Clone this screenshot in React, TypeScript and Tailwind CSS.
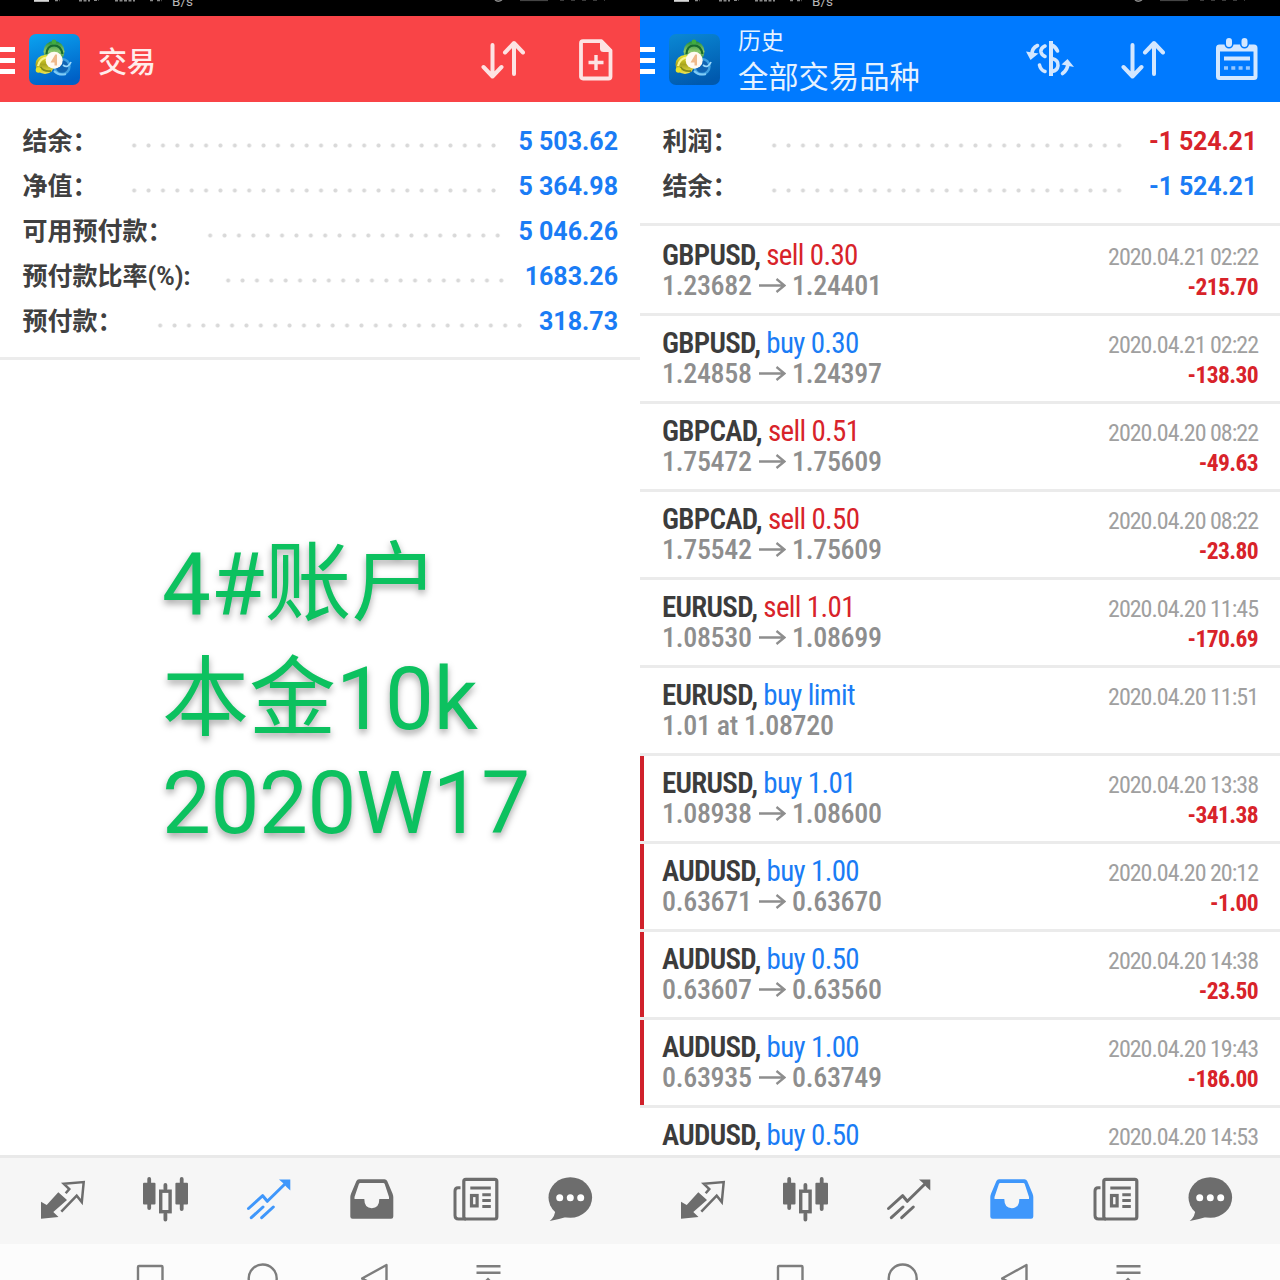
import React from "react";

const GRAY = "#6d6d6d";
const BLUE = "#3f97fb";

type IconProps = { color: string };

function StatusBar() {
  return (
    <div className="relative h-4 shrink-0 overflow-hidden bg-black">
      <svg className="absolute left-0 top-0" width="640" height="16" fill="none">
        <path d="M34 0.8H49" stroke="#d8d8d8" strokeWidth="2" />
        <path d="M55 0.5H60M79 0.7H90M94 .4h5M115 0.8H135M150 .5h4M157 .5h5" stroke="#8a8a8a" strokeWidth="1.4" strokeDasharray="3 1.5" />
        <path d="M495 0Q498 2.4 502 0" stroke="#8a8a8a" strokeWidth="1.4" />
        <path d="M520 .5H548" stroke="#444" strokeWidth="1.2" />
        <path d="M560 .4H605" stroke="#444" strokeWidth="1" strokeDasharray="4 7" />
      </svg>
      <span className="absolute left-[172px] top-[-7px] text-[13.500px] leading-[16px] text-[#b8b8b8]">B/s</span>
    </div>
  );
}

function Hamburger() {
  return (
    <div className="mt-[3px] flex w-[15px] shrink-0 flex-col gap-[6px]">
      <div className="h-[5px] bg-white" />
      <div className="h-[5px] bg-white" />
      <div className="h-[5px] bg-white" />
    </div>
  );
}

function AppIcon({ id, dark }: { id: string; dark?: boolean }) {
  return (
    <svg width="51" height="51" viewBox="0 0 51 51" className="ml-[14px] mt-px shrink-0">
      <defs>
        <linearGradient id={id + "bg"} x1="0.2" y1="0" x2="0.5" y2="1">
          <stop offset="0" stopColor={dark ? "#0a86d2" : "#0aa0ee"} />
          <stop offset="1" stopColor={dark ? "#0059ae" : "#0060c6"} />
        </linearGradient>
        <linearGradient id={id + "g"} x1="0" y1="0" x2="0" y2="1">
          <stop offset="0" stopColor="#1f8c3c" />
          <stop offset=".5" stopColor="#8cc86c" />
          <stop offset="1" stopColor="#127a35" />
        </linearGradient>
        <linearGradient id={id + "y"} x1="0" y1="0" x2="0" y2="1">
          <stop offset="0" stopColor="#f0e632" />
          <stop offset=".5" stopColor="#a9a51e" />
          <stop offset="1" stopColor="#f0e650" />
        </linearGradient>
      </defs>
      <rect width="51" height="51" rx="7" fill={`url(#${id}bg)`} />
      <circle cx="33" cy="32.500" r="7.500" fill="#0f63b4" stroke="#3f9fe0" strokeWidth="2.400" />
      <path d="M34 31Q39 35 42 28" stroke="#9cd8fb" strokeWidth="1.800" fill="none" />
      <path d="M25 37Q30 42 37 40" stroke="#7fcbf6" strokeWidth="2" fill="none" />
      <circle cx="25" cy="17.500" r="10.500" fill={`url(#${id}g)`} />
      <path d="M17.500 20Q18 11.500 25 11.500Q32 11.500 33.500 20" stroke="#176b30" strokeWidth="2.200" fill="none" />
      <circle cx="25" cy="8" r="2.400" fill="#3fae3f" />
      <circle cx="16" cy="30.500" r="9.500" fill={`url(#${id}y)`} />
      <path d="M9 32Q11 24 18 23.500" stroke="#f8f58c" strokeWidth="2.200" fill="none" />
      <path d="M11.500 33Q15 38 22 37" stroke="#7f8a1c" strokeWidth="1.800" fill="none" />
      <circle cx="9.500" cy="36" r="2.800" fill="#e8e229" />
      <circle cx="25.200" cy="26.300" r="8.500" fill="#fffaf2" />
      <path d="M26.300 20.500L21.500 28.500H25.500V31.500H28V20.500Z" fill="#efb98b" />
    </svg>
  );
}

function SortIcon({ color }: IconProps) {
  return (
    <svg width="44" height="40" viewBox="0 0 44 40" fill="none" stroke={color} strokeWidth="4" strokeLinecap="round" strokeLinejoin="round" className="mt-px shrink-0">
      <path d="M11.500 5V36M2.500 27L11.500 36.500L20.500 27" />
      <path d="M33 34V3.500M24 12.500L33 3L42 12.500" />
    </svg>
  );
}

function NewOrderIcon() {
  return (
    <svg width="34" height="42" viewBox="0 0 34 42" className="mt-px shrink-0" fill="none" stroke="#fde3e3">
      <path d="M4 2.200H22.500L31.500 11.500V37.500Q31.500 39.500 29.500 39.500H4Q2 39.500 2 37.500V4.200Q2 2.200 4 2.200Z" strokeWidth="3.800" strokeLinejoin="round" />
      <path d="M21 1.500V9.500Q21 13 24.500 13H33V11L23.500 1.500Z" fill="#fde3e3" stroke="none" />
      <path d="M17 16V31M9.500 23.500H24.500" strokeWidth="3.400" />
    </svg>
  );
}

function DollarIcon() {
  return (
    <svg width="48" height="40" viewBox="0 0 48 40" className="shrink-0" fill="none" stroke="#d3e7ff" strokeWidth="3.600" strokeLinecap="round">
      <path d="M25 2V37" strokeWidth="4" strokeLinecap="butt" />
      <path d="M25.500 6Q29.500 7.500 31.500 12" />
      <path d="M19 7Q14.500 9 15 13Q15.500 16 19 17.500" />
      <path d="M13.500 26Q14.500 31 19 32.500" />
      <path d="M26 19.500Q32.500 21 32 26.500Q31.500 31.500 26 32.500" />
      <path d="M11.500 6.500Q6 9 6 15" />
      <path d="M0 12.500L12.500 14.500L4.500 21Z" fill="#d3e7ff" stroke="none" />
      <path d="M36.500 34.500Q41.500 31 42 25" />
      <path d="M35.500 25.500L41.500 20L48 28Z" fill="#d3e7ff" stroke="none" />
    </svg>
  );
}

function CalendarIcon() {
  return (
    <svg width="42" height="44" viewBox="0 0 42 44" className="shrink-0" fill="none" stroke="#d3e7ff">
      <rect x="2" y="9.500" width="37.500" height="31.500" rx="1.500" strokeWidth="4" />
      <path d="M1 8.500H40V14.500H1Z" fill="#d3e7ff" stroke="none" />
      <path d="M13 4.500V7M28.500 4.500V7" stroke="#007aff" strokeWidth="9" strokeLinecap="round" />
      <path d="M13 4V7M28.500 4V7" strokeWidth="6" strokeLinecap="round" />
      <path d="M8 21.500H34" strokeWidth="4" />
      <path d="M8 31H34" strokeWidth="3.500" strokeDasharray="4 3.300" opacity=".7" />
    </svg>
  );
}

function QuotesIcon({ color }: IconProps) {
  return (
    <svg width="48" height="48" viewBox="0 0 48 48">
      <path d="M3 26.700V43.700L20.500 42L15.300 36.900L29 25L20.300 17.300L8.700 30Z" fill={color} />
      <path d="M23.300 36.700L38.700 20.700L43.800 27L45.700 7L25.800 8.700L31.300 14L27.700 18.300" fill="none" stroke={color} strokeWidth="2.500" />
    </svg>
  );
}

function CandlesIcon({ color }: IconProps) {
  return (
    <svg width="48" height="48" viewBox="0 0 48 48" fill="none" stroke={color}>
      <path d="M8.200 4V33M40.700 4V34" strokeWidth="3.800" strokeLinecap="round" />
      <rect x="2" y="7.700" width="12.500" height="21.800" rx="1" fill={color} stroke="none" />
      <rect x="34.400" y="7.700" width="12.600" height="21.800" rx="1" fill={color} stroke="none" />
      <path d="M24.400 10V14M24.400 39V44.500" strokeWidth="3.800" strokeLinecap="round" />
      <rect x="19.700" y="16.200" width="9.400" height="20.500" strokeWidth="3.400" />
    </svg>
  );
}

function TrendIcon({ color }: IconProps) {
  return (
    <svg width="48" height="48" viewBox="0 0 48 48" fill="none" stroke={color} strokeWidth="3" strokeLinecap="round">
      <path d="M3.500 33.500L17.700 20.700L22.300 26.300L42 7" strokeLinejoin="round" />
      <path d="M34 4.500H45.300V15.500L41.500 12L38.500 8.500Z" fill={color} stroke="none" />
      <path d="M6.300 42.700L18 32M16.700 42.700L28.300 32" />
    </svg>
  );
}

function InboxIcon({ color }: IconProps) {
  return (
    <svg width="48" height="48" viewBox="0 0 48 48">
      <path
        fill={color}
        fillRule="evenodd"
        d="M11 4.300H36.500Q38.300 4.300 39.200 6L44.500 18.500Q45.300 20.500 45.300 22V41.500Q45.300 43.700 43.100 43.700H4.500Q2.300 43.700 2.300 41.500V22Q2.300 20.500 3.100 18.500L8.400 6Q9.200 4.300 11 4.300ZM12.200 8Q11.300 8 10.900 9L6.500 22V24H16.300Q16.300 33.200 23.800 33.200Q31.300 33.200 31.300 24H41V22L36.700 9Q36.300 8 35.400 8Z"
      />
    </svg>
  );
}

function NewsIcon({ color }: IconProps) {
  return (
    <svg width="48" height="48" viewBox="0 0 48 48" fill="none" stroke={color} strokeWidth="3.200">
      <rect x="11.800" y="4.300" width="33" height="39.700" rx="2" />
      <path d="M8.500 12.800H6Q3 12.800 3 16V40.500Q3 44 6.500 44H14" strokeWidth="3" />
      <path d="M18.300 13H38.800M30.300 19.800H38.800M30.300 25.600H38.800M30.300 31.400H38.800" strokeWidth="3" />
      <rect x="19.500" y="20.500" width="5.600" height="10.400" strokeWidth="3.200" />
    </svg>
  );
}

function ChatIcon({ color }: IconProps) {
  return (
    <svg width="48" height="48" viewBox="0 0 48 48">
      <ellipse cx="24.300" cy="22.500" rx="21.800" ry="20.200" fill={color} />
      <path d="M3.700 46Q9.500 41.500 9.500 33L22 41.500Q14 44 3.700 46Z" fill={color} />
      <g fill="#fff">
        <circle cx="13.700" cy="22.700" r="3.500" />
        <circle cx="24.300" cy="22.700" r="3.500" />
        <circle cx="34.700" cy="22.700" r="3.500" />
      </g>
    </svg>
  );
}

function BottomNav({ active }: { active: number }) {
  const c = (i: number) => (i === active ? BLUE : GRAY);
  return (
    <div className="h-[125px] shrink-0">
      <nav className="flex h-[89px] gap-[55.250px] border-t-[3px] border-[#e9e9e9] bg-[#f6f6f6] pl-[38px] pt-[17px]">
        <QuotesIcon color={c(0)} />
        <CandlesIcon color={c(1)} />
        <TrendIcon color={c(2)} />
        <InboxIcon color={c(3)} />
        <div className="ml-px">
          <NewsIcon color={c(4)} />
        </div>
        <div className="-ml-[9px]">
          <ChatIcon color={c(5)} />
        </div>
      </nav>
      <div className="flex h-9 items-start gap-[83px] overflow-hidden bg-[#fcfcfc] pl-[135px] pt-[18px]">
        <svg width="30" height="30" fill="none" stroke="#7d7d7d" strokeWidth="2.400">
          <rect x="3" y="4" width="24.500" height="26" rx="1" />
        </svg>
        <svg width="30" height="32" fill="none" stroke="#7d7d7d" strokeWidth="2.400" className="overflow-visible">
          <circle cx="14.700" cy="16.500" r="14" />
        </svg>
        <svg width="30" height="30" fill="none" stroke="#7d7d7d" strokeWidth="2.400" strokeLinejoin="round">
          <path d="M25.500 3V29L1 16.500Z" />
        </svg>
        <svg width="30" height="30" fill="none" stroke="#7d7d7d" strokeWidth="2.400">
          <path d="M2.500 4.200H26.500M2.500 10.700H26.500" />
          <path d="M14 15.500L20 21.500H8Z" fill="#7d7d7d" stroke="none" />
        </svg>
      </div>
    </div>
  );
}

type SummaryProps = { label: string; labelW: string; dotsW: string; value: string; valueClass: string };

function SummaryRow({ label, labelW, dotsW, value, valueClass }: SummaryProps) {
  return (
    <div className="flex h-[45px] items-start pl-[22.500px]">
      <span className={"shrink-0 whitespace-nowrap text-[25px] font-bold leading-[45px] text-[#404040] " + labelW}>{label}</span>
      <span className={"mt-[21px] h-[11px] shrink-0 bg-[radial-gradient(circle,#d9d9d9_1.500px,transparent_2.500px)] bg-[length:14.380px_11px] " + dotsW} />
      <span className={"ml-auto whitespace-nowrap text-[25px] font-bold leading-[45px] " + valueClass}>{value}</span>
    </div>
  );
}

const balances: SummaryProps[] = [
  { label: "结余：", labelW: "w-[104.800px]", dotsW: "w-[373.900px]", value: "5 503.62", valueClass: "text-[#1a7cf5] pr-[22px]" },
  { label: "净值：", labelW: "w-[104.800px]", dotsW: "w-[373.900px]", value: "5 364.98", valueClass: "text-[#1a7cf5] pr-[22px]" },
  { label: "可用预付款：", labelW: "w-[180.300px]", dotsW: "w-[302px]", value: "5 046.26", valueClass: "text-[#1a7cf5] pr-[22px]" },
  { label: "预付款比率(%):", labelW: "w-[198.800px]", dotsW: "w-[287.600px]", value: "1683.26", valueClass: "text-[#1a7cf5] pr-[22px]" },
  { label: "预付款：", labelW: "w-[130.300px]", dotsW: "w-[373.900px]", value: "318.73", valueClass: "text-[#1a7cf5] pr-[22px]" },
];

const totals: SummaryProps[] = [
  { label: "利润：", labelW: "w-[104.800px]", dotsW: "w-[359.500px]", value: "-1 524.21", valueClass: "text-[#d8232a] tracking-[-0.150px] pr-[23px]" },
  { label: "结余：", labelW: "w-[104.800px]", dotsW: "w-[359.500px]", value: "-1 524.21", valueClass: "text-[#1a7cf5] tracking-[-0.150px] pr-[23px]" },
];

type Deal = { pair: string; side: string; from?: string; to?: string; note?: string; date: string; profit?: string; marked?: boolean };

const deals: Deal[] = [
  { pair: "GBPUSD", side: "sell 0.30", from: "1.23682", to: "1.24401", date: "2020.04.21 02:22", profit: "-215.70" },
  { pair: "GBPUSD", side: "buy 0.30", from: "1.24858", to: "1.24397", date: "2020.04.21 02:22", profit: "-138.30" },
  { pair: "GBPCAD", side: "sell 0.51", from: "1.75472", to: "1.75609", date: "2020.04.20 08:22", profit: "-49.63" },
  { pair: "GBPCAD", side: "sell 0.50", from: "1.75542", to: "1.75609", date: "2020.04.20 08:22", profit: "-23.80" },
  { pair: "EURUSD", side: "sell 1.01", from: "1.08530", to: "1.08699", date: "2020.04.20 11:45", profit: "-170.69" },
  { pair: "EURUSD", side: "buy limit", note: "1.01 at 1.08720", date: "2020.04.20 11:51" },
  { pair: "EURUSD", side: "buy 1.01", from: "1.08938", to: "1.08600", date: "2020.04.20 13:38", profit: "-341.38", marked: true },
  { pair: "AUDUSD", side: "buy 1.00", from: "0.63671", to: "0.63670", date: "2020.04.20 20:12", profit: "-1.00", marked: true },
  { pair: "AUDUSD", side: "buy 0.50", from: "0.63607", to: "0.63560", date: "2020.04.20 14:38", profit: "-23.50", marked: true },
  { pair: "AUDUSD", side: "buy 1.00", from: "0.63935", to: "0.63749", date: "2020.04.20 19:43", profit: "-186.00", marked: true },
  { pair: "AUDUSD", side: "buy 0.50", from: "0.63590", to: "0.63550", date: "2020.04.20 14:53" },
];

function DealRow({ deal, first }: { deal: Deal; first: boolean }) {
  return (
    <div
      className={
        "flex shrink-0 justify-between whitespace-nowrap border-b-[3px] border-b-[#ebebeb] pr-[22px] [font-stretch:75%] " +
        (first ? "h-[90px] pt-[2px]" : "h-[88px]")
      }
    >
      <div className="flex">
        <div className={"w-1 " + (deal.marked ? "bg-[#d0212b]" : "")} />
        <div className="pl-[18px] pt-[12px]">
          <div className="text-[29px] leading-[30px]">
            <span className="font-semibold tracking-[-0.700px] text-[#3c3c3c]">{deal.pair}, </span>
            <span className={"tracking-[-0.650px] " + (deal.side.startsWith("sell") ? "text-[#d8232a]" : "text-[#1a7cf5]")}>{deal.side}</span>
          </div>
          <div className="flex items-center pt-px text-[28px] font-medium leading-[30px] tracking-[-0.300px] text-[#8e8e8e]">
            {deal.note ? (
              <span>{deal.note}</span>
            ) : (
              <>
                <span className="w-[96px]">{deal.from}</span>
                <svg width="28" height="16" fill="none" stroke="#8e8e8e" strokeWidth="2.300" className="mr-[6px]">
                  <path d="M1 7.500H26.500M18.500 1L26.500 7.500L18.500 14" />
                </svg>
                <span>{deal.to}</span>
              </>
            )}
          </div>
        </div>
      </div>
      <div className="pt-[14px] text-right leading-[30px]">
        <div className="text-[24px] tracking-[-1px] text-[#a0a0a0]">{deal.date}</div>
        <div className="text-[23.500px] font-bold tracking-[-0.600px] text-[#d8232a]">{deal.profit}</div>
      </div>
    </div>
  );
}

export default function App() {
  return (
    <div className="flex h-[1280px] w-[1280px] overflow-hidden bg-white font-['Roboto','Noto_Sans_CJK_SC',sans-serif]">
      <section className="flex h-full w-[640px] flex-col overflow-hidden">
        <StatusBar />
        <header className="flex h-[86px] shrink-0 items-center bg-[#f94447]">
          <Hamburger />
          <AppIcon id="l" />
          <span className="ml-[18px] mt-[7px] text-[29px] font-medium leading-[40px] text-[#ffeceb]">交易</span>
          <div className="ml-auto flex items-center gap-[54px] pr-[27px]">
            <SortIcon color="#fde3e3" />
            <NewOrderIcon />
          </div>
        </header>
        <div className="h-[258px] shrink-0 border-b-[3px] border-[#ececec] pt-[17px]">
          {balances.map((b) => (
            <SummaryRow key={b.label} {...b} />
          ))}
        </div>
        <div className="flex-1 pl-[162px] pt-[169px] text-[87px] text-[#0cc15f] [text-shadow:0_4px_7px_rgba(0,0,0,0.350)]">
          <div className="leading-[110px]">4#账户</div>
          <div className="leading-[120px]">本金10k</div>
          <div className="leading-[88px] tracking-[-0.400px]">2020W17</div>
        </div>
        <BottomNav active={2} />
      </section>

      <section className="flex h-full w-[640px] flex-col overflow-hidden">
        <StatusBar />
        <header className="flex h-[86px] shrink-0 items-center bg-[#007aff]">
          <Hamburger />
          <AppIcon id="r" dark />
          <div className="ml-[18px] mt-[6px] text-[#e6f2ff]">
            <div className="text-[23px] leading-[32px]">历史</div>
            <div className="text-[30.300px] leading-[40px]">全部交易品种</div>
          </div>
          <div className="ml-auto flex items-center pr-[22px]">
            <DollarIcon />
            <div className="ml-[47px]">
              <SortIcon color="#d3e7ff" />
            </div>
            <div className="ml-[51px]">
              <CalendarIcon />
            </div>
          </div>
        </header>
        <div className="h-[124px] shrink-0 border-b-[3px] border-[#ebebeb] pt-[17px]">
          {totals.map((t) => (
            <SummaryRow key={t.label} {...t} />
          ))}
        </div>
        <div className="flex min-h-0 flex-1 flex-col overflow-hidden">
          {deals.map((d, i) => (
            <DealRow key={i} deal={d} first={i === 0} />
          ))}
        </div>
        <BottomNav active={3} />
      </section>
    </div>
  );
}
